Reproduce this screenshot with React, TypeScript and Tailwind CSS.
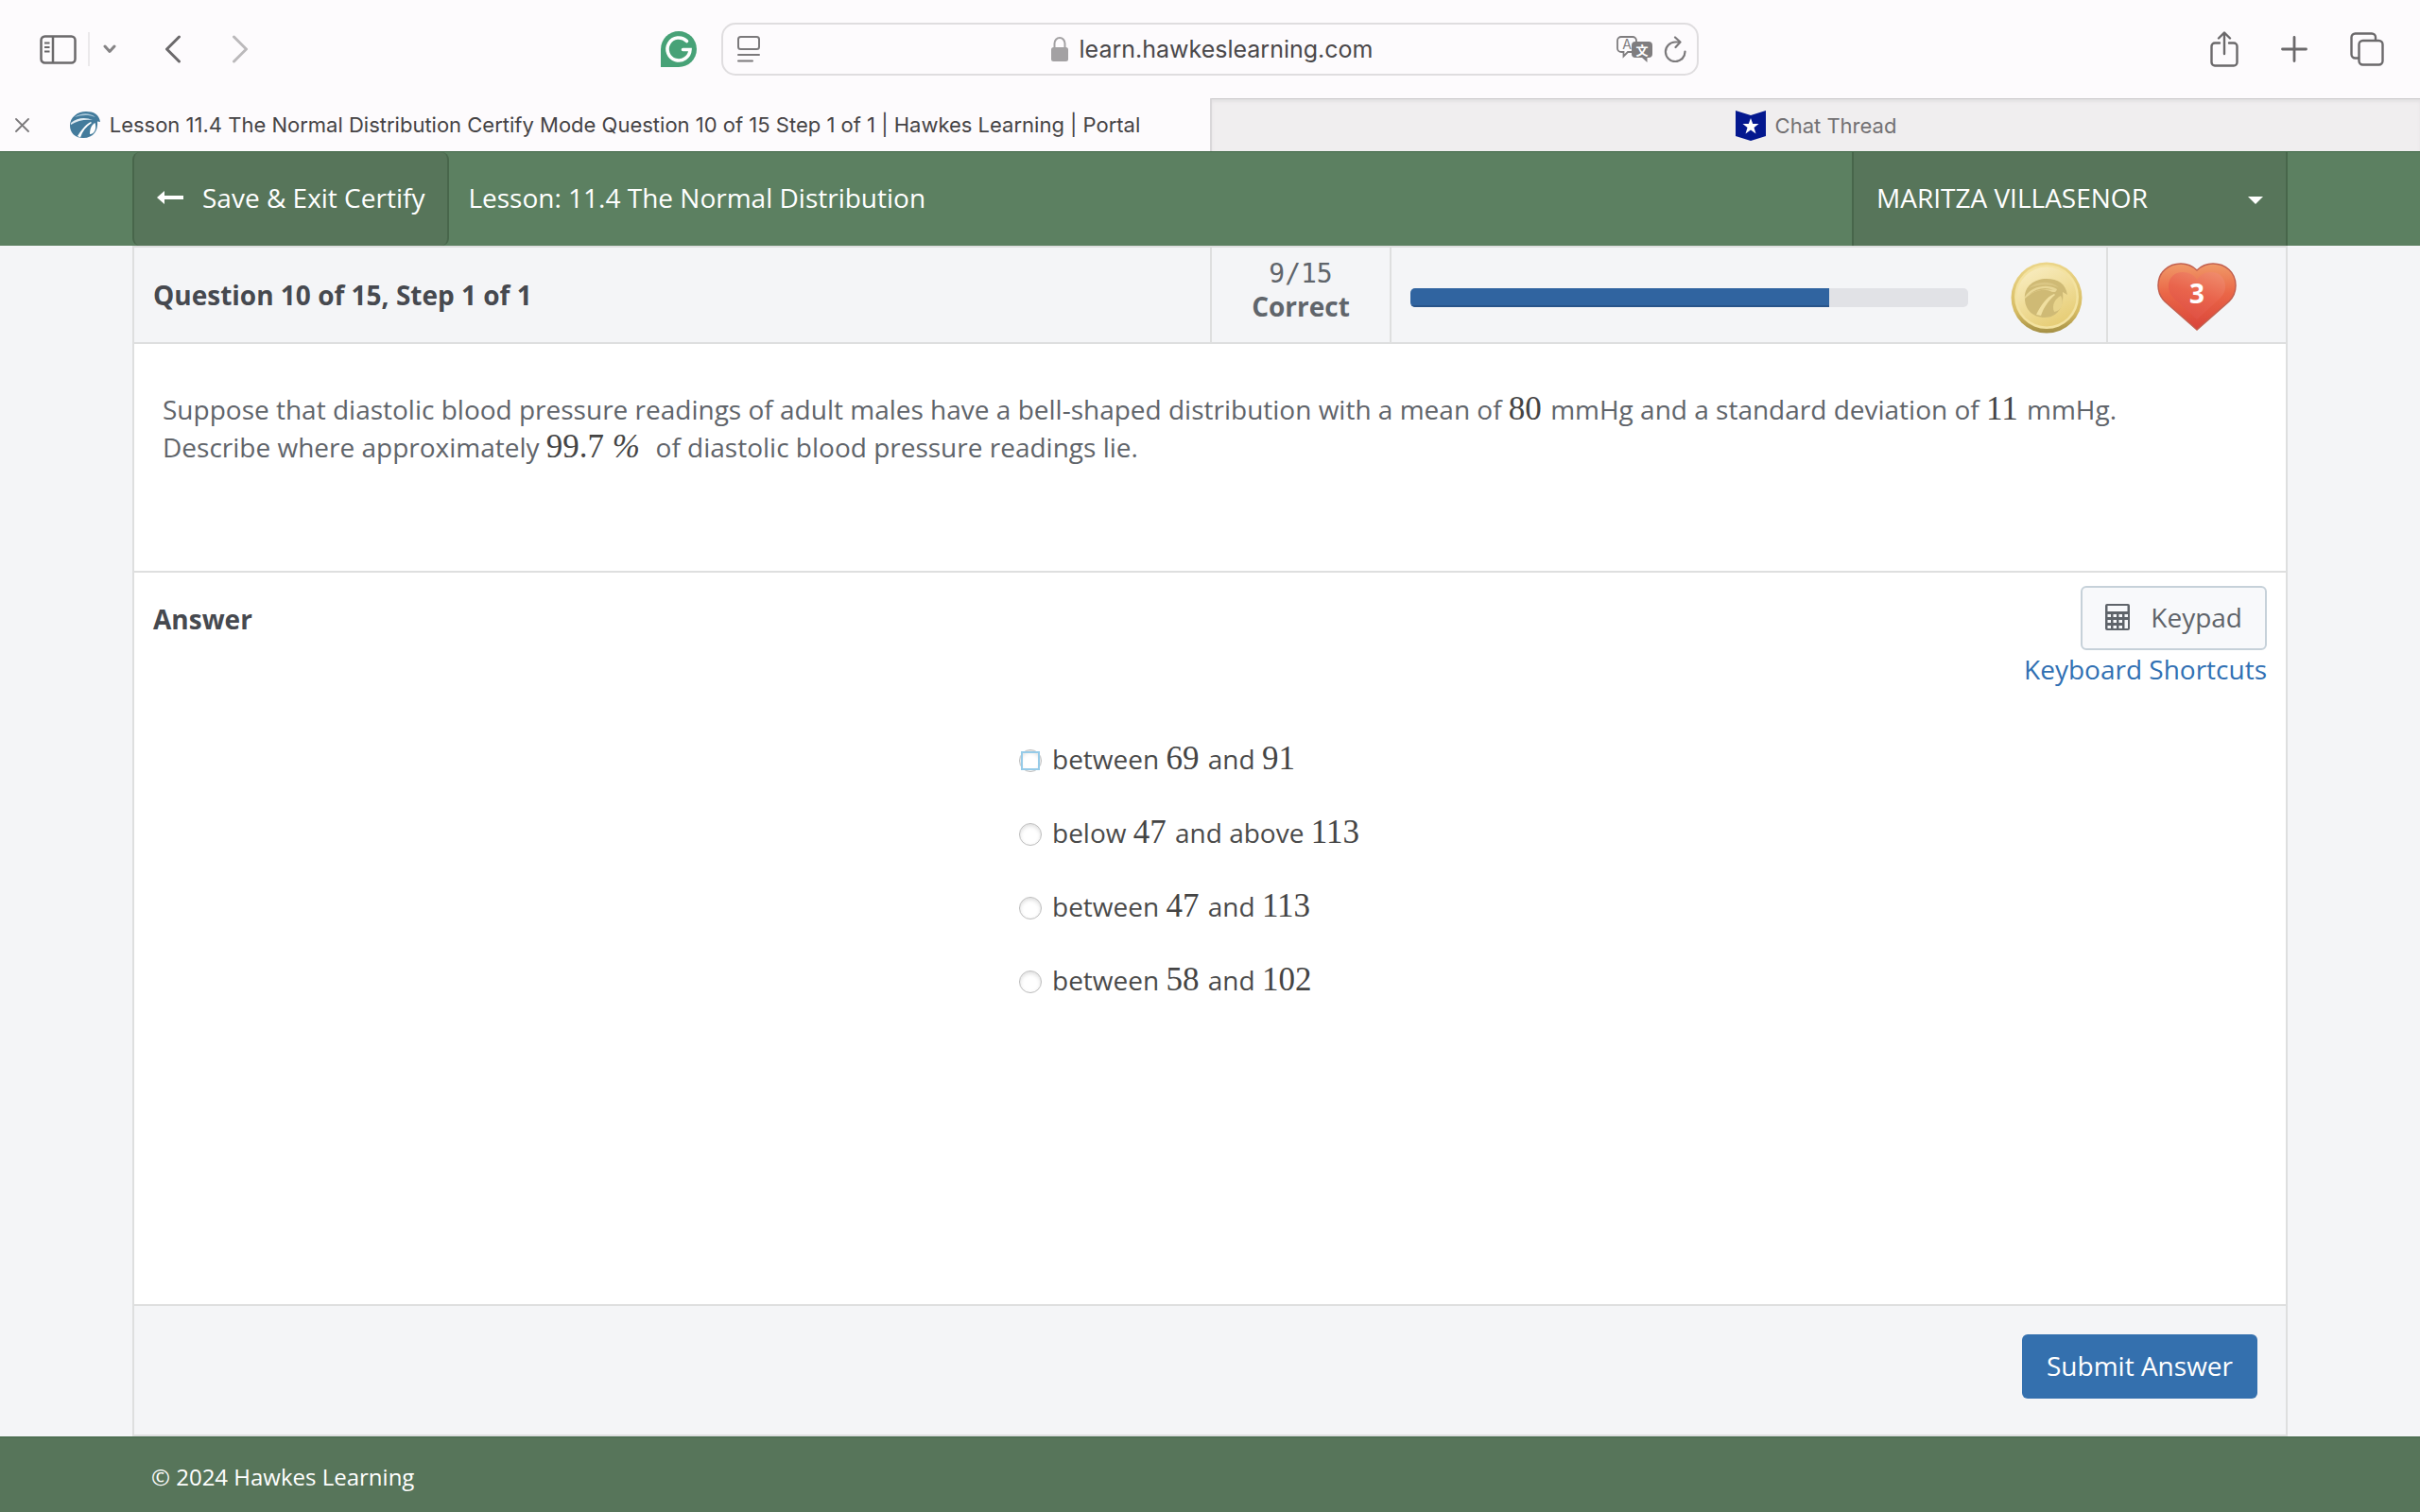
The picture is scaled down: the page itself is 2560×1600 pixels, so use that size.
import { useState, type ReactNode } from "react";

const options = [
  { id: "a", first: "between", low: "69", second: "and", high: "91" },
  { id: "b", first: "below", low: "47", second: "and above", high: "113" },
  { id: "c", first: "between", low: "47", second: "and", high: "113" },
  { id: "d", first: "between", low: "58", second: "and", high: "102" },
];

const progress = { done: 75, total: 100 };

/* Numbers are set in a serif face like typeset math */
function Num({ children }: { children: ReactNode }) {
  return (
    <span className="mr-0.5 font-['Liberation_Serif',serif] text-[35px] leading-none text-[#444444]">
      {children}
    </span>
  );
}

function HawkIcon() {
  return (
    <svg width="32" height="28" viewBox="0 0 32 28" aria-hidden="true">
      <path d="M17 0C25 0 31 3 32 11L29 10.500C30 20 25 28 14 28 5 28 0 22 0 15 0 6 8 0 17 0Z" fill="#437b9c" />
      <path d="M5 6C12 1 21 1 27 6 20 3 12 3.500 5 6Z" fill="#a9c8da" />
      <path d="M1 12C8 6 17 6 24 9 17 8 8 9 1 14Z" fill="#dfebf2" />
      <path d="M22 11C16 14 12 20 8 26L11 27.500C13 21 17 16 23 12Z" fill="#ffffff" />
      <path d="M26.500 12C23 14 21 18 21 24 26 24 28.500 18 26.500 12Z" fill="#ffffff" />
    </svg>
  );
}

function Coin() {
  return (
    <svg width="76" height="76" viewBox="0 0 76 76" aria-hidden="true">
      <defs>
        <linearGradient id="coinRim" x1="0" y1="0" x2="0" y2="1">
          <stop offset="0" stopColor="#ecd68a" />
          <stop offset="0.7" stopColor="#d6bb62" />
          <stop offset="1" stopColor="#a48f45" />
        </linearGradient>
        <linearGradient id="coinFace" x1="0.2" y1="0" x2="0.7" y2="1">
          <stop offset="0" stopColor="#f8ecc0" />
          <stop offset="0.5" stopColor="#f0dd99" />
          <stop offset="1" stopColor="#e6cc74" />
        </linearGradient>
      </defs>
      <circle cx="38" cy="38" r="37.500" fill="url(#coinRim)" />
      <circle cx="38" cy="37" r="34" fill="#f3e2a0" />
      <circle cx="38" cy="37" r="31.500" fill="url(#coinFace)" />
      <path
        d="M15 39C14 26 25 18 38 18 50 18 58 23 60 35L55 32C57 48 49 59 36 59 23 59 15 50 15 39Z"
        fill="#cfba75"
      />
      <path d="M19 28C28 20 42 20 51 27 40 23 29 24 19 28Z" fill="#dac684" />
      <path d="M15 37C23 25 39 23 49 29 48 33 46 32 44 32 34 27 24 31 15 39Z" fill="#e8d696" />
      <path d="M19 35C27 28 37 26 45 30 36 28 27 30 19 35Z" fill="#cfba75" />
      <path d="M46 34C38 37 32 46 27 56L32 57C35 48 40 41 47 35Z" fill="#f0dfa0" />
      <path d="M53 36C47 39 43 46 46 53 54 52 57 43 53 36Z" fill="#e8d48c" />
    </svg>
  );
}

function Heart() {
  return (
    <svg width="84" height="72" viewBox="0 0 84 72" aria-hidden="true">
      <defs>
        <linearGradient id="heartOuter" x1="0" y1="0" x2="0" y2="1">
          <stop offset="0" stopColor="#f09a68" />
          <stop offset="0.45" stopColor="#ea6647" />
          <stop offset="1" stopColor="#d9443a" />
        </linearGradient>
        <linearGradient id="heartInner" x1="0.8" y1="0" x2="0.4" y2="1">
          <stop offset="0" stopColor="#ef8a6b" />
          <stop offset="0.5" stopColor="#e9644c" />
          <stop offset="1" stopColor="#df5044" />
        </linearGradient>
      </defs>
      <path
        d="M42 71L8 41C2 35 1 29 1 24 1 10 12 1 25 1 33 1 38 4 42 8 46 4 51 1 59 1 72 1 83 10 83 24 83 29 82 35 76 41Z"
        fill="url(#heartOuter)"
        stroke="#c2604f"
        strokeWidth="1.5"
      />
      <path
        d="M42 60L17 37C13 33 12 29 12 25 12 16 18 10 27 10 34 10 39 13 42 18 45 13 50 10 57 10 66 10 72 16 72 25 72 29 71 33 67 37Z"
        fill="url(#heartInner)"
      />
    </svg>
  );
}

function Toolbar() {
  return (
    <div className="grid h-[104px] grid-cols-[1fr_auto_1fr] items-center bg-[#fdfbfd] text-[#6b696b]">
      <div className="flex items-center pl-[42px] pr-[26px]">
        <button type="button" aria-label="Show sidebar">
          <svg width="39" height="31" viewBox="0 0 39 31" fill="none" stroke="currentColor" strokeWidth="2.5">
            <rect x="1.500" y="1.500" width="36" height="28" rx="4" />
            <path d="M14 2V29" />
            <path d="M5 8.500H10.500M5 13H10.500M5 17.500H10.500" strokeWidth="1.8" />
          </svg>
        </button>
        <div className="ml-3 h-9 w-0.5 bg-[#ebe9eb]" />
        <button type="button" aria-label="Tab groups" className="ml-3.5">
          <svg width="14" height="10" viewBox="0 0 14 10" fill="none" stroke="#858385" strokeWidth="3" strokeLinecap="round" strokeLinejoin="round">
            <path d="M2 2L7 7.500L12 2" />
          </svg>
        </button>
        <button type="button" aria-label="Back" className="ml-[51px]">
          <svg width="18" height="30" viewBox="0 0 18 30" fill="none" stroke="currentColor" strokeWidth="3" strokeLinecap="round" strokeLinejoin="round">
            <path d="M15.500 2L2.500 15L15.500 28" />
          </svg>
        </button>
        <button type="button" aria-label="Forward" className="ml-[53px]">
          <svg width="18" height="30" viewBox="0 0 18 30" fill="none" stroke="#bbb9bb" strokeWidth="3" strokeLinecap="round" strokeLinejoin="round">
            <path d="M2.500 2L15.500 15L2.500 28" />
          </svg>
        </button>
        <button type="button" aria-label="Grammarly" className="ml-auto">
          <svg width="38" height="38" viewBox="0 0 38 38" fill="none">
            <path d="M19 0A19 19 0 1 1 19 38H0V19A19 19 0 0 1 19 0Z" fill="#47a277" />
            <path d="M27.500 10.500A12 12 0 1 0 31 19.500H23.500" stroke="#ffffff" strokeWidth="3.6" strokeLinecap="round" />
          </svg>
        </button>
      </div>

      <div className="grid h-14 w-[1034px] grid-cols-[1fr_auto_1fr] items-center rounded-[15px] border-2 border-[#dfdddf] pl-[15px] pr-[11px]">
        <button type="button" aria-label="Reader" className="w-fit">
          <svg width="24" height="28" viewBox="0 0 24 28" fill="none" stroke="#7b797b" strokeWidth="2" strokeLinecap="round">
            <rect x="1" y="1" width="22" height="13" rx="2.500" />
            <path d="M1 20H23M1 26.500H16" />
          </svg>
        </button>
        <div className="flex items-center gap-3">
          <svg width="18" height="26" viewBox="0 0 18 26" fill="none" aria-hidden="true">
            <path d="M3.500 12V7A5.500 6 0 0 1 14.500 7V12" stroke="#a3a1a3" strokeWidth="2" />
            <rect y="11" width="18" height="15" rx="2.500" fill="#a3a1a3" />
          </svg>
          <span className="font-['Inter',sans-serif] text-[25px] text-[#4a484a]">learn.hawkeslearning.com</span>
        </div>
        <div className="flex items-center justify-end gap-3">
          <button type="button" aria-label="Translate">
            <svg width="38" height="28" viewBox="0 0 38 28" fill="none">
              <path
                d="M17 17L12 17L7.500 21.500V17H5A4 4 0 0 1 1 13V5A4 4 0 0 1 5 1H17A4 4 0 0 1 21 5V7"
                stroke="#7f7d7f"
                strokeWidth="1.8"
              />
              <path d="M20 6H34A4 4 0 0 1 38 10V19A4 4 0 0 1 34 23H32.500V28L27 23H20A4 4 0 0 1 16 19V10A4 4 0 0 1 20 6Z" fill="#7f7d7f" />
              <text x="11" y="13.500" textAnchor="middle" fontSize="14" fontFamily="Inter, sans-serif" fill="#7f7d7f">A</text>
              <text x="27" y="19.500" textAnchor="middle" fontSize="13" fontWeight="bold" fontFamily="'Noto Sans CJK SC', sans-serif" fill="#ffffff">文</text>
            </svg>
          </button>
          <button type="button" aria-label="Reload">
            <svg width="24" height="28" viewBox="0 0 24 28" fill="none" stroke="#7b797b" strokeWidth="2.2" strokeLinecap="round" strokeLinejoin="round">
              <path d="M17 6.500H12A10.300 10.300 0 1 0 22.500 16.500" />
              <path d="M12 1.500L17.500 6.500L12.500 12" />
            </svg>
          </button>
        </div>
      </div>

      <div className="flex items-center justify-end gap-[45px] pr-[38px]">
        <button type="button" aria-label="Share">
          <svg width="30" height="38" viewBox="0 0 30 38" fill="none" stroke="currentColor" strokeWidth="2.4" strokeLinecap="round" strokeLinejoin="round">
            <path d="M10 12.500H5A3.500 3.500 0 0 0 1.500 16V33A3.500 3.500 0 0 0 5 36.500H25A3.500 3.500 0 0 0 28.500 33V16A3.500 3.500 0 0 0 25 12.500H20" />
            <path d="M15 24V2M9 7.500L15 1.500L21 7.500" />
          </svg>
        </button>
        <button type="button" aria-label="New tab">
          <svg width="28" height="28" viewBox="0 0 28 28" fill="none" stroke="currentColor" strokeWidth="2.8" strokeLinecap="round">
            <path d="M14 1.500V26.500M1.500 14H26.500" />
          </svg>
        </button>
        <button type="button" aria-label="Tab overview">
          <svg width="36" height="36" viewBox="0 0 36 36" fill="none" stroke="currentColor" strokeWidth="2.4">
            <path d="M9 27.500H5.500A4 4 0 0 1 1.500 23.500V5.500A4 4 0 0 1 5.500 1.500H23A4 4 0 0 1 27 5.500V9" />
            <rect x="9.500" y="9" width="25" height="25.500" rx="4" />
          </svg>
        </button>
      </div>
    </div>
  );
}

function TabBar() {
  return (
    <div className="grid h-14 grid-cols-2 font-['Inter',sans-serif] text-[22px]">
      <div className="flex items-center bg-[#fdfbfd] pl-4 pr-[31px] text-[#454345]">
        <button type="button" aria-label="Close tab">
          <svg width="15" height="15" viewBox="0 0 15 15" fill="none" stroke="#7b797b" strokeWidth="1.8" strokeLinecap="round">
            <path d="M1 1L14 14M14 1L1 14" />
          </svg>
        </button>
        <div className="flex flex-1 items-center justify-center gap-2.5">
          <HawkIcon />
          <span>
            Lesson 11.4 The Normal Distribution Certify Mode Question 10 of 15 Step 1 of 1 | Hawkes Learning | Portal
          </span>
        </div>
      </div>
      <div className="flex items-center justify-center gap-2.5 border-l-2 border-t border-l-[#d9d7d9] border-t-[#c9c7c9] bg-[#f0eeef] text-[#737173] shadow-[inset_0_3px_3px_#e4e2e4]">
        <svg width="32" height="32" viewBox="0 0 32 32" aria-hidden="true">
          <path d="M0 0L16 5L32 0V27L16 32L0 27Z" fill="#04188f" />
          <path d="M16 8L18.200 14H24.500L19.500 18L21.500 24.500L16 20.500L10.500 24.500L12.500 18L7.500 14H13.800Z" fill="#ffffff" />
        </svg>
        <span>Chat Thread</span>
      </div>
    </div>
  );
}

function Header() {
  return (
    <header className="h-[100px] border-t border-[#3f6645] bg-[#5c8061] px-[140px] text-white">
      <div className="flex h-full items-stretch">
        <button
          type="button"
          className="flex items-center gap-5 rounded-lg border-x-2 border-[#48664b] bg-[#57755a] px-6 pb-[3px]"
        >
          <svg width="28" height="14" viewBox="0 0 28 14" aria-hidden="true">
            <path d="M0 7L8 0V5H28V9H8V14Z" fill="#ffffff" />
          </svg>
          Save &amp; Exit Certify
        </button>
        <div className="flex flex-1 items-center pb-[3px] pl-5">Lesson: 11.4 The Normal Distribution</div>
        <button
          type="button"
          className="flex w-[461px] items-center justify-between border-x-2 border-[#48664b] bg-[#57755a] px-6 pb-[3px]"
        >
          MARITZA VILLASENOR
          <svg width="16" height="14" viewBox="0 0 16 14" aria-hidden="true">
            <path d="M0 6H16L8 14Z" fill="#ffffff" />
          </svg>
        </button>
      </div>
    </header>
  );
}

export default function App() {
  const [answer, setAnswer] = useState("");

  return (
    <div className="flex min-h-screen flex-col bg-[#f4f5f7] font-['Open_Sans',sans-serif] text-[28px] leading-[40px]">
      <Toolbar />
      <TabBar />
      <Header />

      <main className="mx-[140px] flex flex-1 flex-col border-2 border-[#dedfdf] bg-white">
        {/* STATUS ROW */}
        <div className="flex h-[102px] border-b-2 border-[#dedfdf] bg-[#f4f5f7]">
          <h1 className="flex flex-1 items-center pl-5 font-bold text-[#46494f]">
            Question 10 of 15, Step 1 of 1
          </h1>
          <div className="w-[190px] border-l-2 border-[#dedfdf] pt-[11px] text-center leading-[34px] text-[#60656b]">
            <div className="font-['DejaVu_Sans_Mono',monospace]">9/15</div>
            <div className="font-bold">Correct</div>
          </div>
          <div className="flex w-[758px] items-center gap-[45px] border-l-2 border-[#dedfdf] pl-5 pr-[25px] pt-1.5">
            <div className="h-5 flex-1 overflow-hidden rounded-[5px] bg-[#e1e2e6]">
              <div
                className="h-full border-b-2 border-[#28548a] bg-[#3064a0]"
                style={{ width: `${(progress.done / progress.total) * 100}%` }}
              />
            </div>
            <Coin />
          </div>
          <div className="flex w-[190px] items-center justify-center border-l-2 border-[#dedfdf] pt-1">
            <div className="relative">
              <Heart />
              <span className="absolute inset-x-0 top-3 text-center font-bold text-white">3</span>
            </div>
          </div>
        </div>

        {/* QUESTION */}
        <section className="min-h-[242px] border-b-2 border-[#dedfdf] px-[30px] pt-[49px] text-[#5f646a]">
          <p>
            Suppose that diastolic blood pressure readings of adult males have a bell-shaped distribution with a mean
            of <Num>80</Num> mmHg and a standard deviation of <Num>11</Num> mmHg.
            <br />
            Describe where approximately <Num>99.7 <i>%</i></Num>&nbsp; of diastolic blood pressure readings lie.
          </p>
        </section>

        {/* ANSWER */}
        <section className="flex-1 px-5 pt-3.5">
          <div className="flex items-start justify-between">
            <h2 className="pt-[15px] font-bold text-[#46494f]">Answer</h2>
            <div className="flex flex-col items-end">
              <button
                type="button"
                className="flex h-[68px] items-center gap-[22px] rounded-md border-2 border-[#c6d1d9] bg-[#f8f9fb] px-6 pb-0.5 text-[#5f646a]"
              >
                <svg width="26" height="28" viewBox="0 0 26 28" aria-hidden="true">
                  <rect width="26" height="28" rx="2" fill="#5f646a" />
                  <path
                    d="M2.500 2H23.500V8H2.500ZM2.500 11H6V14H2.500ZM8.500 11H12V14H8.500ZM14.500 11H18V14H14.500ZM20.500 11H24V14H20.500ZM2.500 17H6V20H2.500ZM8.500 17H12V20H8.500ZM14.500 17H18V20H14.500ZM20.500 17H24V26H20.500ZM2.500 23H6V26H2.500ZM8.500 23H12V26H8.500ZM14.500 23H18V26H14.500Z"
                    fill="#f8f9fb"
                  />
                </svg>
                Keypad
              </button>
              <a href="#shortcuts" className="text-[#3070b3]">
                Keyboard Shortcuts
              </a>
            </div>
          </div>

          <div role="radiogroup" aria-label="Answer" className="mx-auto mt-[55px] flex w-[404px] flex-col gap-[38px] text-[#4a4a4a]">
            {options.map((o, i) => (
              <label key={o.id} className="flex items-center gap-[11px]">
                <span className="relative mt-1 flex">
                  <input
                    type="radio"
                    name="answer"
                    value={o.id}
                    checked={answer === o.id}
                    onChange={() => setAnswer(o.id)}
                    className="size-6 appearance-none rounded-full border border-[#bdbdbd] bg-white shadow-[inset_0_2px_4px_#dddddd] checked:border-[7px] checked:border-[#3470ae]"
                  />
                  {/* focus marker sits on the first choice */}
                  {i === 0 && <span className="absolute inset-0.5 border-2 border-[#96cbe8]" />}
                </span>
                <span className="flex-1">
                  {o.first} <Num>{o.low}</Num> {o.second} <Num>{o.high}</Num>
                </span>
              </label>
            ))}
          </div>
        </section>

        <div className="flex h-[138px] items-start justify-end border-t-2 border-[#dedfdf] bg-[#f4f5f7] pr-[30px] pt-[30px]">
          <button type="button" className="h-[68px] rounded-md bg-[#3470ae] px-[26px] pb-0.5 text-white">
            Submit Answer
          </button>
        </div>
      </main>

      <footer className="flex h-20 items-center border-t-2 border-[#4f7054] bg-[#57755a] px-40 pt-1 text-[24px] text-white">
        © 2024 Hawkes Learning
      </footer>
    </div>
  );
}
